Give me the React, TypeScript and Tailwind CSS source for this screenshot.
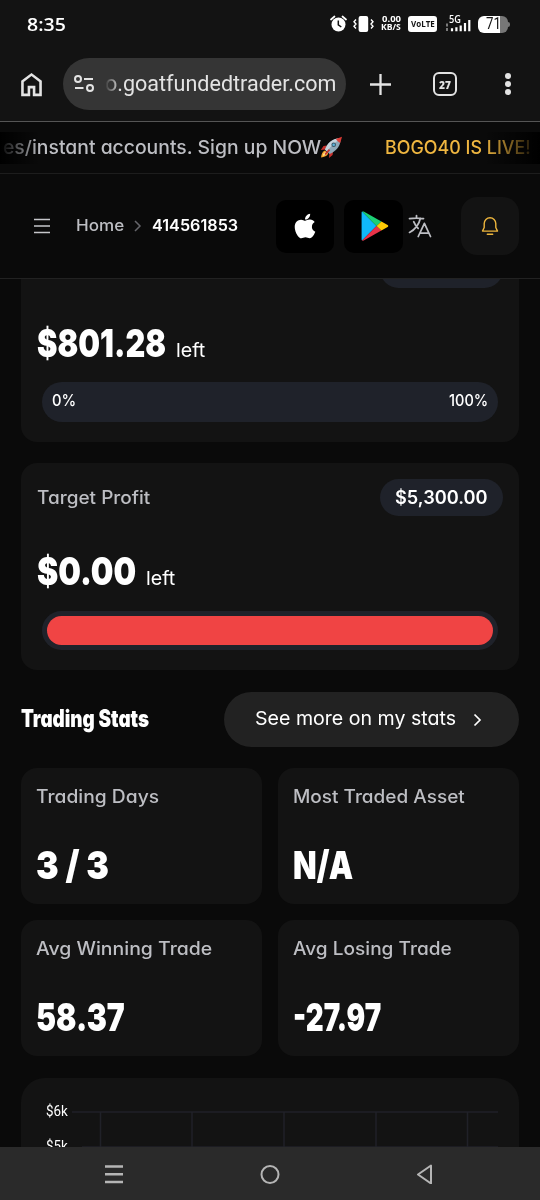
import { useLayoutEffect, useRef, useState } from 'react'
import type { ReactNode } from 'react'
import { FaApple } from 'react-icons/fa'
import { HiOutlineLanguage } from 'react-icons/hi2'

type FitProps = { width: number; className?: string; children: ReactNode }

// Squeezes or stretches a single line of text to a fixed width
function Fit({ width, className = '', children }: FitProps) {
  const ref = useRef<HTMLSpanElement>(null)
  const [scale, setScale] = useState(1)

  useLayoutEffect(() => {
    if (ref.current) setScale(width / ref.current.offsetWidth)
  }, [width])

  return (
    <span className={`flex shrink-0 ${className}`} style={{ width }}>
      <span
        ref={ref}
        className="block shrink-0 origin-left whitespace-pre"
        style={{ transform: `scaleX(${scale})` }}
      >
        {children}
      </span>
    </span>
  )
}

function StatusBar() {
  return (
    <div className="flex h-12 items-center bg-[#131313] pl-[27px] text-white">
      <Fit width={39} className="-mt-px font-['Open_Sans'] text-[18px] leading-6 font-semibold">
        8:35
      </Fit>
      <div className="ml-[264px] flex items-center">
        <svg width="17" height="18" viewBox="0 0 17 18">
          <circle cx="8.5" cy="9.5" r="7" fill="#fff" />
          <path d="M1 4.5 4.5 1.5M16 4.5 12.5 1.5" stroke="#fff" strokeWidth="1.7" strokeLinecap="round" />
          <path d="M8.3 5.5v4.3l3 2.2" stroke="#131313" strokeWidth="1.5" fill="none" />
        </svg>
        <svg className="ml-1.5" width="21" height="18" viewBox="0 0 21 18">
          <rect x="5.6" y="1" width="9.6" height="16" rx="2" fill="#fff" />
          <path
            d="M3 4.5 1 6.7 3 9 1 11.3 3 13.5M18 4.5 20 6.7 18 9 20 11.3 18 13.5"
            stroke="#fff"
            strokeWidth="1.4"
            fill="none"
          />
        </svg>
        <div className="mt-[-3px] ml-[7px] flex flex-col items-center font-['Open_Sans'] text-[9px] leading-[8px] font-bold">
          <Fit width={19}>0.00</Fit>
          <Fit width={20}>KB/S</Fit>
        </div>
        <div className="ml-[7px] flex h-4 w-[29px] items-center justify-center rounded-[3px] bg-white font-['Open_Sans'] text-[9px] leading-none font-bold text-[#131313]">
          <Fit width={24} className="-mt-px">
            VoLTE
          </Fit>
        </div>
        <div className="ml-2 flex w-[26px] flex-col">
          <Fit width={12} className="ml-1 font-['Open_Sans'] text-[10px] leading-[7px] font-semibold">
            5G
          </Fit>
          <svg className="-mt-1" width="26" height="13" viewBox="0 0 26 13">
            <path d="M2 4.5v3M2 9v3" stroke="#888" strokeWidth="1.8" />
            <path d="M7 12.3V9.2M11.4 12.3V8.2M15.7 12.3V6.6M20 12.3V4M24.3 12.3V1" stroke="#fff" strokeWidth="2.2" />
          </svg>
        </div>
        <div className="ml-[7px] flex items-center">
          <div className="flex h-[17px] w-[30px] items-center justify-center rounded-md bg-[linear-gradient(to_right,#fff_22px,#777_22px)] font-['Roboto'] text-[16px] leading-none text-[#131313]">
            <Fit width={15}>71</Fit>
          </div>
          <div className="h-[5px] w-[2px] rounded-r bg-[#777]" />
        </div>
      </div>
    </div>
  )
}

function BrowserBar() {
  return (
    <div className="flex h-[74px] items-center border-b border-[#555] bg-[#131313] pb-px pl-4">
      <svg width="31" height="31" viewBox="0 0 24 24" fill="#e3e3e3">
        <path d="M6 19h3v-6h6v6h3v-9l-6-4.5L6 10zm-2 2V9l8-6 8 6v12h-7v-6h-2v6z" />
      </svg>
      <div className="ml-4 flex h-[52px] w-[283px] items-center rounded-full bg-[#353535] pl-[11px]">
        <svg width="20" height="18" viewBox="0 0 20 18" fill="none" stroke="#e3e3e3" strokeWidth="2">
          <circle cx="4" cy="4" r="3" />
          <path d="M10 4h9M1 13h8.5" />
          <circle cx="16" cy="13" r="3" />
        </svg>
        <Fit
          width={231}
          className="ml-[11px] font-['Roboto'] text-[22px] leading-7 text-[#e3e3e3] [mask-image:linear-gradient(to_right,transparent,black_15px)]"
        >
          o.goatfundedtrader.com
        </Fit>
      </div>
      <svg className="ml-6" width="21" height="21" viewBox="0 0 21 21" stroke="#e3e3e3" strokeWidth="2.3">
        <path d="M10.5 0v21M0 10.5h21" />
      </svg>
      <div className="ml-[42px] flex h-6 w-6 items-center justify-center rounded-[6px] border-[2.5px] border-[#e3e3e3] font-['Open_Sans'] text-[11px] leading-none font-extrabold text-[#e3e3e3]">
        <Fit width={12}>27</Fit>
      </div>
      <div className="ml-12 flex flex-col gap-[2.5px]">
        <div className="size-[5.5px] rounded-full bg-[#e3e3e3]" />
        <div className="size-[5.5px] rounded-full bg-[#e3e3e3]" />
        <div className="size-[5.5px] rounded-full bg-[#e3e3e3]" />
      </div>
    </div>
  )
}

function Rocket() {
  return (
    <svg className="-ml-px" width="23" height="23" viewBox="0 0 23 23">
      <path d="M7 9.5 3.5 10 .8 14l4.5-.4zM13 15.5l-.4 3.6L9 22l.4-4.6z" fill="#c8322e" />
      <path d="M5 14.5C2.5 15.5 1.5 18 1 21.6c3.5-.4 6-1.4 7.2-4z" fill="#f7a72f" />
      <path d="M5.2 16c-1.3.7-2 2-2.4 3.8 1.8-.3 3-.9 3.8-2.2z" fill="#fff0a0" />
      <path d="M5 13.5C7.5 7 12 3 18.5 2.5l2 2C20 11 15.5 15.5 9.5 18z" fill="#8fa9b8" />
      <path d="M5 13.5C7.5 7 12 3 18.5 2.5l1 1C14 7 10 11 7 15.6z" fill="#c5d3dc" />
      <path d="M16 2.9 22 .8l-1.8 6.1c-1.6-.8-3.3-2.3-4.2-4z" fill="#dd3b35" />
      <circle cx="13.7" cy="8.8" r="2.3" fill="#3a5564" />
      <circle cx="13.7" cy="8.8" r="1.3" fill="#59b7df" />
      <path d="m5 18.5 4.5-4.8" stroke="#c8322e" strokeWidth="1.7" />
    </svg>
  )
}

function PromoBanner() {
  return (
    <div className="relative flex h-[52px] items-center overflow-hidden border-b border-[#1d1d1d] pb-px pl-[3px] text-[18.5px] leading-7 font-medium text-[#bdbec3]">
      <Fit width={318}>es/instant accounts. Sign up NOW</Fit>
      <Rocket />
      <Fit width={146} className="ml-[42px] text-[#efb640]">
        BOGO40 IS LIVE!
      </Fit>
      <div className="absolute top-2.5 left-0 h-8 w-10 bg-linear-to-r from-black to-transparent" />
      <div className="absolute top-2.5 right-0 h-8 w-14 bg-linear-to-l from-black to-transparent" />
    </div>
  )
}

function Header() {
  return (
    <div className="flex h-[105px] items-center border-b border-[#222] pl-[34px]">
      <svg width="16" height="16" viewBox="0 0 16 16" stroke="#c6c7cb" strokeWidth="1.5">
        <path d="M0 1.5h16M0 8h16M0 14.5h16" />
      </svg>
      <Fit width={48} className="-mt-0.5 ml-[26px] text-[16px] leading-6 font-medium text-[#bdbec3]">
        Home
      </Fit>
      <svg className="ml-[9px]" width="9" height="12" viewBox="0 0 9 12" fill="none" stroke="#65666b" strokeWidth="1.5">
        <path d="m2 1 5 5-5 5" />
      </svg>
      <Fit width={86} className="-mt-0.5 ml-2.5 text-[16px] leading-6 font-semibold text-white">
        414561853
      </Fit>
      <div className="ml-[38px] flex h-[53px] w-[58px] items-center justify-center rounded-[10px] bg-black">
        <FaApple className="size-[28px] text-white" />
      </div>
      <div className="ml-2.5 flex h-[53px] w-[59px] items-center justify-center rounded-[10px] bg-black">
        <svg className="ml-0.5" width="28" height="30" viewBox="0 0 28 30">
          <path d="M.6 1.5v27c0 .4.2.7.5.9L15.5 15 1.1.6a1 1 0 0 0-.5.9z" fill="#10b8fa" />
          <path d="M1.1.6c.4-.3 1-.3 1.6 0L20.4 10.5 15.5 15z" fill="#1cd075" />
          <path d="M1.1 29.4c.4.3 1 .3 1.6 0l17.7-9.9L15.5 15z" fill="#e83349" />
          <path d="m20.4 10.5 6.2 3.5c.9.5.9 1.5 0 2l-6.2 3.5L15.5 15z" fill="#ffcb05" />
        </svg>
      </div>
      <HiOutlineLanguage className="ml-[3px] size-[28px] text-[#bdbec3]" />
      <div className="ml-[27px] flex size-[58px] items-center justify-center rounded-2xl bg-[#131313]">
        <svg
          width="18"
          height="20"
          viewBox="0 0 18 20"
          fill="none"
          stroke="#edb53d"
          strokeWidth="1.4"
          strokeLinejoin="round"
          strokeLinecap="round"
        >
          <path d="M3.2 7.5a5.8 5.8 0 0 1 11.6 0v4l1.7 3.6H1.5l1.7-3.6zM6.3 18.3h5.4" />
        </svg>
      </div>
    </div>
  )
}

type GoalCardProps = {
  title?: string
  total?: string
  amount: string
  amountWidth: number
  children: ReactNode
}

function GoalCard({ title, total, amount, amountWidth, children }: GoalCardProps) {
  return (
    <div className="flex h-[207px] shrink-0 flex-col rounded-2xl bg-[#131313] p-4">
      <div className="flex h-[37px] items-center justify-between">
        <div>
          {title && (
            <Fit width={113} className="text-[18px] leading-7 font-medium text-[#bdbec3]">
              {title}
            </Fit>
          )}
        </div>
        <div className="flex h-[37px] w-[123px] items-center justify-center rounded-full bg-[#1f222a] text-[18px] font-semibold text-white">
          {total && <Fit width={93}>{total}</Fit>}
        </div>
      </div>
      <div className="mt-[35px] flex h-10 items-baseline text-white">
        <Fit width={amountWidth} className="text-[39px] leading-10 font-black">
          {amount}
        </Fit>
        <Fit width={29} className="ml-2.5 text-[19px]">
          left
        </Fit>
      </div>
      {children}
    </div>
  )
}

type StatProps = { label: string; labelWidth: number; value: string; valueWidth: number }

const stats: StatProps[] = [
  { label: 'Trading Days', labelWidth: 123, value: '3 / 3', valueWidth: 73 },
  { label: 'Most Traded Asset', labelWidth: 172, value: 'N/A', valueWidth: 60 },
  { label: 'Avg Winning Trade', labelWidth: 176, value: '58.37', valueWidth: 89 },
  { label: 'Avg Losing Trade', labelWidth: 159, value: '-27.97', valueWidth: 88 },
]

function StatCard({ label, labelWidth, value, valueWidth }: StatProps) {
  return (
    <div className="h-[136px] rounded-2xl bg-[#131313] px-[15px] pt-[15px]">
      <Fit width={labelWidth} className="text-[18px] leading-7 font-medium text-[#bdbec3]">
        {label}
      </Fit>
      <Fit width={valueWidth} className="mt-[34px] text-[39px] leading-10 font-black text-white">
        {value}
      </Fit>
    </div>
  )
}

function ChartCard() {
  return (
    <div className="mt-[22px] flex shrink-0 rounded-t-3xl bg-[#131313] pt-6 pl-[25px]">
      <div className="flex flex-col gap-[17px] font-['Roboto'] text-[14px] leading-[18px] text-white">
        <Fit width={22}>$6k</Fit>
        <Fit width={22}>$5k</Fit>
      </div>
      <svg className="mt-[9px] ml-1" width="430" height="60" viewBox="0 0 430 60" stroke="#202128" strokeWidth="1.5">
        <path d="M0 1h426M28.5 1v59M120 1v59M212 1v59M304 1v59M395.5 1v59M10 36h416" />
      </svg>
    </div>
  )
}

function NavBar() {
  return (
    <div className="flex h-[53px] items-center bg-[#2a2a2a] pl-[105px]">
      <svg width="18" height="20" viewBox="0 0 18 20" stroke="#b5b5b5" strokeWidth="2.5">
        <path d="M0 2.5h18M0 10.3h18M0 18h18" />
      </svg>
      <svg className="ml-[137px]" width="20" height="20" viewBox="0 0 20 20" fill="none" stroke="#b5b5b5" strokeWidth="2">
        <circle cx="10" cy="10.5" r="8.5" />
      </svg>
      <svg
        className="ml-[136px]"
        width="17"
        height="20"
        viewBox="0 0 17 20"
        fill="none"
        stroke="#b5b5b5"
        strokeWidth="2"
        strokeLinejoin="round"
      >
        <path d="M15 1.5v18L2 10.5z" />
      </svg>
    </div>
  )
}

export default function App() {
  return (
    <div className="flex h-[1200px] w-[540px] flex-col overflow-hidden bg-[#0a0a0a] font-['Inter',sans-serif] [font-feature-settings:'cv11']">
      <StatusBar />
      <BrowserBar />
      <PromoBanner />
      <Header />
      <main className="flex h-[868px] flex-col overflow-hidden px-[21px]">
        <div className="-mt-11 flex flex-col gap-[21px]">
          <GoalCard amount="$801.28" amountWidth={129}>
            <div className="mx-[5px] mt-[19px] flex h-10 shrink-0 items-center justify-between rounded-full bg-[#1f222a] px-2.5 pb-1 text-[16px] font-medium text-white">
              <Fit width={24}>0%</Fit>
              <Fit width={39}>100%</Fit>
            </div>
          </GoalCard>
          <GoalCard title="Target Profit" total="$5,300.00" amount="$0.00" amountWidth={99}>
            <div className="mx-[5px] mt-5 h-[39px] shrink-0 rounded-full bg-[#1f222a] p-[5px]">
              <div className="h-full rounded-full bg-[#f04444]" />
            </div>
          </GoalCard>
        </div>
        <div className="mt-[22px] flex h-[55px] shrink-0 items-center justify-between text-white">
          <Fit width={128} className="-mt-0.5 text-[24px] leading-8 font-black">
            Trading Stats
          </Fit>
          <div className="flex h-[55px] w-[295px] items-center rounded-full bg-[#222] pl-[31px]">
            <Fit width={201} className="-mt-px text-[19px] leading-7">
              See more on my stats
            </Fit>
            <svg className="ml-[17px]" width="9" height="14" viewBox="0 0 9 14" fill="none" stroke="#fff" strokeWidth="1.7">
              <path d="m1.5 1.5 5.5 5.5-5.5 5.5" />
            </svg>
          </div>
        </div>
        <div className="mt-[21px] grid shrink-0 grid-cols-2 gap-4">
          {stats.map((stat) => (
            <StatCard key={stat.label} {...stat} />
          ))}
        </div>
        <ChartCard />
      </main>
      <NavBar />
    </div>
  )
}
